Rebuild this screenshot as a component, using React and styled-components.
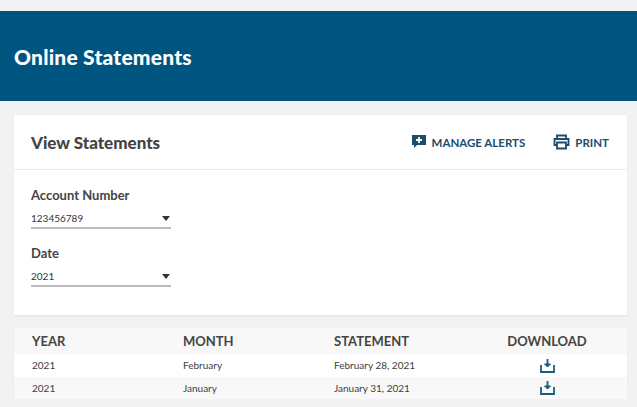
import React from 'react';
import styled, { createGlobalStyle } from 'styled-components';

const Global = createGlobalStyle`
  body { margin: 0; background: #f2f2f2; font-family: Lato, "Open Sans", sans-serif; color: #3d3d3d; }
`;

const Banner = styled.div`
  margin-top: 11px;
  height: 90px;
  background: #005580;
  display: flex;
  align-items: center;
  padding: 0 14px;
  h1 { margin: 0; color: #fff; font-size: 21px; font-weight: 900; letter-spacing: 0.2px; }
`;

const Page = styled.div`
  padding: 14px 10px 0 14px;
  display: flex;
  flex-direction: column;
  gap: 13px;
`;

const Card = styled.div`
  background: #fff;
  box-shadow: 0 1px 2px rgba(0,0,0,0.06);
`;

const CardHead = styled.div`
  height: 54px;
  display: flex;
  align-items: center;
  padding: 0 18px 0 17px;
  border-bottom: 1px solid #ececec;
  h2 { margin: 0; flex: 1; font-size: 17px; font-weight: 900; color: #444; }
`;

const Action = styled.a`
  display: flex;
  align-items: center;
  gap: 5px;
  margin-left: 28px;
  color: #1a4d6e;
  font-size: 11.5px;
  font-weight: 700;
`;

const Form = styled.div`
  padding: 17px 17px 12px;
`;

const Label = styled.div`
  font-size: 13px;
  line-height: 16px;
  font-weight: 700;
  color: #444;
  margin-bottom: 6px;
`;

const Select = styled.div`
  width: 139px;
  height: 18px;
  display: flex;
  align-items: center;
  justify-content: space-between;
  border-bottom: 2px solid #bcbcbc;
  font-size: 10px;
  color: #333;
  margin-bottom: 16px;
  padding-right: 1px;
  &::after { content: ''; border: 4px solid transparent; border-top: 5px solid #333; margin-top: 4px; }
`;

const Table = styled.div`
  background: #fff;
  box-shadow: 0 1px 2px rgba(0,0,0,0.06);
`;

const Row = styled.div`
  display: grid;
  grid-template-columns: 151px 151px 151px 1fr;
  align-items: center;
  padding-left: 18px;
  height: ${p => (p.$head ? 26 : 22.5)}px;
  background: ${p => (p.$alt ? '#f8f8f8' : '#fff')};
  font-size: ${p => (p.$head ? 13 : 10)}px;
  font-weight: ${p => (p.$head ? 700 : 400)};
  color: ${p => (p.$head ? '#444' : '#3d3d3d')};
  & > :last-child { text-align: center; padding-right: 18px; display: flex; justify-content: center; }
`;

const Chat = () => (
  <svg width="16" height="16" viewBox="0 0 16 16">
    <path d="M1 1h14v10H6l-3 3v-3H1z" fill="#1a4d6e" />
    <path d="M8 3v6M5 6h6" stroke="#fff" strokeWidth="1.8" />
  </svg>
);

const Printer = () => (
  <svg width="17" height="16" viewBox="0 0 17 16" fill="none" stroke="#1a4d6e" strokeWidth="1.8">
    <path d="M4 5V1.5h9V5M4 11H1.5V5h14v6H13M4 8.5h9v6H4z" />
  </svg>
);

const Download = () => (
  <svg width="15" height="15" viewBox="0 0 15 15" fill="none" stroke="#1a5a80" strokeWidth="1.8">
    <path d="M1 7v7h13V7M7.5 1v7" />
    <path d="M4.5 6l3 3 3-3z" fill="#1a5a80" strokeWidth="1" />
  </svg>
);

const rows = [
  ['2021', 'February', 'February 28, 2021'],
  ['2021', 'January', 'January 31, 2021'],
];

export default function App() {
  return (
    <>
      <Global />
      <Banner><h1>Online Statements</h1></Banner>
      <Page>
        <Card>
          <CardHead>
            <h2>View Statements</h2>
            <Action><Chat />MANAGE ALERTS</Action>
            <Action><Printer />PRINT</Action>
          </CardHead>
          <Form>
            <Label>Account Number</Label>
            <Select>123456789</Select>
            <Label>Date</Label>
            <Select>2021</Select>
          </Form>
        </Card>
        <Table>
          <Row $head $alt><span>YEAR</span><span>MONTH</span><span>STATEMENT</span><span>DOWNLOAD</span></Row>
          {rows.map((r, i) => (
            <Row key={i} $alt={i % 2 === 1}>
              <span>{r[0]}</span><span>{r[1]}</span><span>{r[2]}</span><span><Download /></span>
            </Row>
          ))}
        </Table>
      </Page>
    </>
  );
}
